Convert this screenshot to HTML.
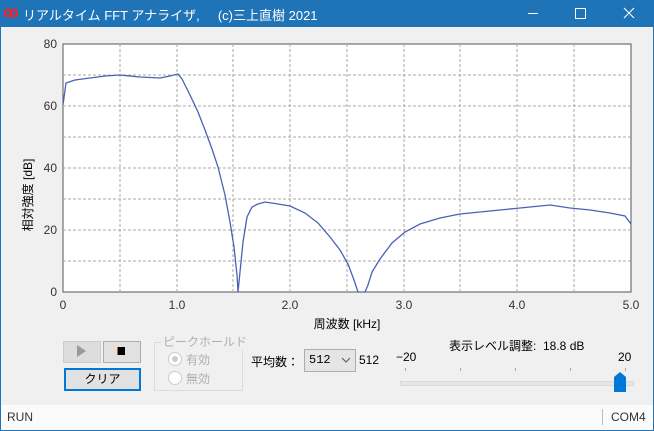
<!DOCTYPE html>
<html><head><meta charset="utf-8"><style>
body{margin:0;width:654px;height:431px;overflow:hidden;font-family:"Liberation Sans","Noto Sans CJK JP",sans-serif;font-size:12px;color:#000;background:#f0f0f0;position:relative}
.a{position:absolute}
</style></head><body>
<div class="a" style="left:0;top:0;width:654px;height:431px;box-sizing:border-box;border:1px solid #1f73b7;border-top:none"></div>
<div class="a" style="left:0;top:0;width:654px;height:27px;background:#1f73b7;color:#fff;font-size:13px">
 <svg class="a" style="left:4px;top:8px" width="14" height="10"><circle cx="4" cy="5" r="3.3" fill="none" stroke="#e8262a" stroke-width="2.4"/><circle cx="10" cy="5" r="3.3" fill="none" stroke="#e8262a" stroke-width="2.4"/></svg>
 <span class="a" style="left:23px;top:5px">リアルタイム FFT アナライザ,&nbsp;&nbsp;&nbsp;&nbsp;&nbsp;(c)三上直樹 2021</span>
 <div class="a" style="left:528px;top:13px;width:10px;height:1px;background:#fff"></div>
 <div class="a" style="left:575px;top:8px;width:9px;height:9px;border:1px solid #fff"></div>
 <svg class="a" style="left:623px;top:7px" width="12" height="12"><path d="M1 1L11 11M11 1L1 11" stroke="#fff" stroke-width="1.1"/></svg>
</div>
<svg class="a" style="left:0;top:27px" width="654" height="320">
 <g font-size="12" fill="#333">
 <text x="57" y="21" text-anchor="end">80</text><text x="57" y="83" text-anchor="end">60</text><text x="57" y="145" text-anchor="end">40</text><text x="57" y="207" text-anchor="end">20</text><text x="57" y="269" text-anchor="end">0</text>
 <text x="63" y="282" text-anchor="middle">0</text><text x="177" y="282" text-anchor="middle">1.0</text><text x="290" y="282" text-anchor="middle">2.0</text><text x="404" y="282" text-anchor="middle">3.0</text><text x="517" y="282" text-anchor="middle">4.0</text><text x="631" y="282" text-anchor="middle">5.0</text>
 <text x="347" y="301" text-anchor="middle" fill="#000">周波数 [kHz]</text>
 <text transform="translate(32,168) rotate(-90)" text-anchor="middle" fill="#000">相対強度 [dB]</text>
 </g>
 <rect x="63" y="17" width="568" height="248" fill="#fff" stroke="#555"/>
 <g stroke="#aaa" stroke-dasharray="3,2" stroke-width="1">
 <path d="M120 17V265M177 17V265M233 17V265M290 17V265M347 17V265M404 17V265M460 17V265M517 17V265M574 17V265"/>
 <path d="M63 48H631M63 79H631M63 110H631M63 141H631M63 172H631M63 203H631M63 234H631"/>
 </g>
 <polyline fill="none" stroke="#4a62b5" stroke-width="1.3" points="63,78 66,56 75,53 90,51 105,49 120,48 140,50 160,51 170,49 178,47 182,52 190,68 198,85 205,103 212,122 218,140 225,168 230,195 234,220 237,248 238,265 240,245 243,215 247,190 252,180 258,177 265,175 278,177 290,179 305,186 318,196 330,210 340,223 348,237 354,253 358,265 365,265 368,258 372,245 380,232 392,216 405,205 420,197 440,191 460,187 480,185 500,183 520,181 550,178 570,181 590,183 610,186 625,189 631,197"/>
</svg>
<!-- controls -->
<div class="a" style="left:63px;top:341px;width:36px;height:20px;background:#ddd;border:1px solid #ccc"></div>
<svg class="a" style="left:76px;top:345px" width="12" height="12"><path d="M1 0L10 6L1 12Z" fill="#9a9a9a"/></svg>
<div class="a" style="left:103px;top:341px;width:36px;height:20px;background:#e1e1e1;border:1px solid #adadad"></div>
<div class="a" style="left:117px;top:347px;width:7px;height:8px;background:#000;border-left:1px solid #c60"></div>
<div class="a" style="left:64px;top:368px;width:73px;height:19px;background:#e1e1e1;border:2px solid #0078d7;text-align:center;line-height:19px">クリア</div>
<div class="a" style="left:154px;top:342px;width:87px;height:47px;border:1px solid #dcdcdc"></div>
<div class="a" style="left:161px;top:333px;background:#f0f0f0;color:#b0b0b0;padding:0 2px">ピークホールド</div>
<div class="a" style="left:168px;top:352px;width:12px;height:12px;border-radius:50%;border:1px solid #ccc;background:#fff"></div>
<div class="a" style="left:172px;top:356px;width:6px;height:6px;border-radius:50%;background:#ccc"></div>
<div class="a" style="left:186px;top:351px;color:#b0b0b0">有効</div>
<div class="a" style="left:168px;top:371px;width:12px;height:12px;border-radius:50%;border:1px solid #ccc;background:#fff"></div>
<div class="a" style="left:186px;top:370px;color:#b0b0b0">無効</div>
<div class="a" style="left:251px;top:353px">平均数：</div>
<div class="a" style="left:304px;top:349px;width:50px;height:21px;background:#e5e5e5;border:1px solid #adadad"></div>
<div class="a" style="left:309px;top:353px;font-family:'Liberation Mono',monospace;font-size:12px">512</div>
<svg class="a" style="left:341px;top:357px" width="10" height="6"><path d="M1 1L5 5L9 1" fill="none" stroke="#555"/></svg>
<div class="a" style="left:359px;top:353px;font-size:12px">512</div>
<div class="a" style="left:449px;top:337px">表示レベル調整:&nbsp; 18.8 dB</div>
<div class="a" style="left:396px;top:350px;font-size:12px">−20</div>
<div class="a" style="left:618px;top:350px;font-size:12px">20</div>
<div class="a" style="left:405px;top:368px;width:1px;height:3px;background:#aaa"></div>
<div class="a" style="left:460px;top:368px;width:1px;height:3px;background:#aaa"></div>
<div class="a" style="left:515px;top:368px;width:1px;height:3px;background:#aaa"></div>
<div class="a" style="left:570px;top:368px;width:1px;height:3px;background:#aaa"></div>
<div class="a" style="left:625px;top:368px;width:1px;height:3px;background:#aaa"></div>
<div class="a" style="left:400px;top:381px;width:232px;height:3px;background:#e6e6e6;border:1px solid #dadada"></div>
<svg class="a" style="left:614px;top:372px" width="12" height="20"><path d="M0 5L6 0L12 5V20H0Z" fill="#0078d7"/></svg>
<!-- status -->
<div class="a" style="left:1px;top:405px;width:652px;height:25px;background:#fbfbfb"></div>
<div class="a" style="left:7px;top:410px;color:#333">RUN</div>
<div class="a" style="left:602px;top:409px;width:1px;height:16px;background:#bbb"></div>
<div class="a" style="left:611px;top:410px;color:#333">COM4</div>
</body></html>
